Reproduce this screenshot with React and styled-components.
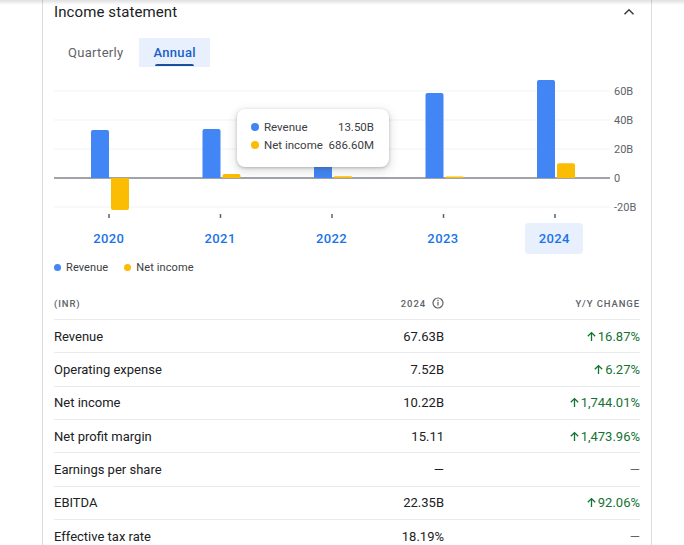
import React from "react";
import styled, { createGlobalStyle } from "styled-components";

const Global = createGlobalStyle`
  html, body { margin: 0; padding: 0; background: #fff; }
  body { font-family: Roboto, "Noto Sans", Arial, sans-serif; color: #202124; overflow: hidden; }
`;

const TopShade = styled.div`
  position: fixed;
  left: 0; right: 0; top: 0;
  height: 5px;
  background: linear-gradient(to bottom, rgba(0,0,0,0.12), rgba(0,0,0,0));
  pointer-events: none;
  z-index: 5;
`;

const Card = styled.section`
  margin-left: 42px;
  width: 610px;
  box-sizing: border-box;
  border-left: 1px solid #dadce0;
  border-right: 1px solid #dadce0;
  padding: 0 11px;
  min-height: 545px;
`;

const Header = styled.div`
  display: flex;
  align-items: center;
  justify-content: space-between;
  height: 24px;
`;

const Title = styled.h2`
  margin: 0;
  font-size: 15px;
  font-weight: 400;
  color: #202124;
  letter-spacing: 0.1px;
`;

const Chevron = styled.svg`
  width: 16px;
  height: 16px;
  margin-right: 3px;
`;

const Tabs = styled.div`
  display: flex;
  gap: 2px;
  margin-top: 14px;
`;

const Tab = styled.button`
  position: relative;
  border: none;
  margin: 0;
  font-family: inherit;
  font-size: 13px;
  font-weight: ${p => (p.$active ? 500 : 400)};
  height: 29px;
  padding: 0 14px 1px;
  border-radius: 0;
  background: ${p => (p.$active ? "#e8f0fe" : "transparent")};
  color: ${p => (p.$active ? "#1a5fc8" : "#5f6368")};
  letter-spacing: 0.3px;
  &::after {
    content: "";
    display: ${p => (p.$active ? "block" : "none")};
    position: absolute;
    left: 16px; right: 16px; bottom: 1px;
    height: 2.5px;
    border-radius: 2px 2px 0 0;
    background: #1a4fa0;
  }
`;

const ChartWrap = styled.div`
  position: relative;
  margin-top: 5px;
`;

const ChartSvg = styled.svg`
  display: block;
  width: 586px;
  height: 151px;
`;

const Tooltip = styled.div`
  position: absolute;
  left: 183px;
  top: 37px;
  width: 152px;
  height: 58px;
  box-sizing: border-box;
  padding: 9px 15px 0 14px;
  background: #fff;
  border-radius: 8px;
  box-shadow: 0 1px 3px rgba(60,64,67,0.3), 0 3px 8px 2px rgba(60,64,67,0.15);
  display: flex;
  flex-direction: column;
`;

const TipRow = styled.div`
  display: flex;
  align-items: center;
  height: 18px;
  font-size: 11.5px;
  color: #3c4043;
`;

const Dot = styled.span`
  width: ${p => p.$size || 8}px;
  height: ${p => p.$size || 8}px;
  border-radius: 50%;
  background: ${p => p.$color};
  flex: none;
  margin-right: ${p => p.$gap || 5}px;
`;

const TipValue = styled.span`
  margin-left: auto;
`;

const Years = styled.div`
  display: flex;
  width: 557px;
  margin-left: -1px;
`;

const YearCell = styled.div`
  flex: 1;
  display: flex;
  justify-content: center;
`;

const Year = styled.div`
  width: 58px;
  height: 31px;
  border-radius: 4px;
  display: flex;
  align-items: center;
  justify-content: center;
  font-size: 13px;
  font-weight: 500;
  color: #1a73e8;
  letter-spacing: 0.4px;
  background: ${p => (p.$active ? "#e8f0fe" : "transparent")};
`;

const Legend = styled.div`
  display: flex;
  align-items: center;
  gap: 16px;
  margin-top: 5px;
  height: 16px;
`;

const LegendItem = styled.div`
  display: flex;
  align-items: center;
  font-size: 11px;
  color: #3c4043;
  letter-spacing: 0.1px;
`;

const Table = styled.div`
  margin-top: 12px;
`;

const Row = styled.div`
  display: grid;
  grid-template-columns: 1fr 110px 196px;
  align-items: center;
  height: ${p => (p.$head ? "32px" : "33.33px")};
  box-sizing: border-box;
  border-top: ${p => (p.$head ? "none" : "1px solid #e8eaed")};
`;

const HeadCell = styled.div`
  font-size: 9.5px;
  font-weight: 500;
  letter-spacing: 0.9px;
  color: #5f6368;
  text-transform: uppercase;
  display: flex;
  align-items: center;
  justify-content: ${p => (p.$right ? "flex-end" : "flex-start")};
  gap: 6px;
`;

const Label = styled.div`
  font-size: 13px;
  color: #202124;
`;

const Value = styled.div`
  font-size: 13px;
  color: #202124;
  text-align: right;
`;

const Change = styled.div`
  font-size: 13px;
  color: ${p => (p.$none ? "#5f6368" : "#137333")};
  display: flex;
  justify-content: flex-end;
  align-items: center;
  gap: 1px;
`;

const InfoIcon = () => (
  <svg width="12" height="12" viewBox="0 0 12 12">
    <circle cx="6" cy="6" r="5" fill="none" stroke="#5f6368" strokeWidth="1.2" />
    <rect x="5.4" y="5" width="1.2" height="3.6" fill="#5f6368" />
    <circle cx="6" cy="3.6" r="0.75" fill="#5f6368" />
  </svg>
);

const UpArrow = () => (
  <svg width="11" height="11" viewBox="0 0 11 11">
    <path d="M5.5 10V1.8M1.8 5.3L5.5 1.6 9.2 5.3" fill="none" stroke="#137333" strokeWidth="1.3" />
  </svg>
);

const years = ["2020", "2021", "2022", "2023", "2024"];
const revenue = [33.1, 33.8, 13.5, 58.6, 67.63];
const netIncome = [-22, 2.7, 1.2, 0.9, 10.22];

const BLUE = "#4285f4";
const YELLOW = "#fbbc04";
const ZERO = 106;
const PX = 29 / 20;

function barPath(x, w, v) {
  const h = Math.max(Math.abs(v) * PX, 1.5);
  const r = Math.min(2, h / 2);
  if (v >= 0) {
    const top = ZERO - h;
    return `M${x} ${ZERO} V${top + r} Q${x} ${top} ${x + r} ${top} H${x + w - r} Q${x + w} ${top} ${x + w} ${top + r} V${ZERO} Z`;
  }
  const bot = ZERO + h;
  return `M${x} ${ZERO} V${bot - r} Q${x} ${bot} ${x + r} ${bot} H${x + w - r} Q${x + w} ${bot} ${x + w} ${bot - r} V${ZERO} Z`;
}

const Chart = () => {
  const grid = [
    { y: 19, l: "60B" },
    { y: 48, l: "40B" },
    { y: 77, l: "20B" },
    { y: 106, l: "0" },
    { y: 135, l: "-20B" },
  ];
  return (
    <ChartSvg viewBox="0 0 586 151">
      {grid.map(g => (
        <g key={g.l}>
          <line
            x1="0"
            x2="556"
            y1={g.y}
            y2={g.y}
            stroke={g.l === "0" ? "#80868b" : "#f1f3f4"}
            strokeWidth={g.l === "0" ? 1.5 : 1}
          />
          <text x="560" y={g.y + 4} fontSize="11" fill="#5f6368" fontFamily="Roboto, sans-serif">
            {g.l}
          </text>
        </g>
      ))}
      {years.map((y, i) => {
        const c = 55 + i * 111.5;
        return (
          <g key={y}>
            <path d={barPath(c - 18, 18, revenue[i])} fill={BLUE} />
            <path d={barPath(c + 2, 18, netIncome[i])} fill={YELLOW} />
            <rect x={c - 0.75} y="142" width="1.5" height="4" fill="#5f6368" />
          </g>
        );
      })}
    </ChartSvg>
  );
};

const rows = [
  { label: "Revenue", value: "67.63B", change: "16.87%" },
  { label: "Operating expense", value: "7.52B", change: "6.27%" },
  { label: "Net income", value: "10.22B", change: "1,744.01%" },
  { label: "Net profit margin", value: "15.11", change: "1,473.96%" },
  { label: "Earnings per share", value: "—", change: null },
  { label: "EBITDA", value: "22.35B", change: "92.06%" },
  { label: "Effective tax rate", value: "18.19%", change: null },
];

export default function App() {
  return (
    <>
      <Global />
      <TopShade />
      <Card>
        <Header>
          <Title>Income statement</Title>
          <Chevron viewBox="0 0 16 16">
            <path d="M3.5 10.2L8 5.8l4.5 4.4" fill="none" stroke="#3c4043" strokeWidth="1.6" />
          </Chevron>
        </Header>
        <Tabs>
          <Tab>Quarterly</Tab>
          <Tab $active>Annual</Tab>
        </Tabs>
        <ChartWrap>
          <Chart />
          <Tooltip>
            <TipRow>
              <Dot $color={BLUE} />
              Revenue
              <TipValue>13.50B</TipValue>
            </TipRow>
            <TipRow>
              <Dot $color={YELLOW} />
              Net income
              <TipValue>686.60M</TipValue>
            </TipRow>
          </Tooltip>
        </ChartWrap>
        <Years>
          {years.map(y => (
            <YearCell key={y}>
              <Year $active={y === "2024"}>{y}</Year>
            </YearCell>
          ))}
        </Years>
        <Legend>
          <LegendItem>
            <Dot $color={BLUE} $size={7} $gap={5} />
            Revenue
          </LegendItem>
          <LegendItem>
            <Dot $color={YELLOW} $size={7} $gap={5} />
            Net income
          </LegendItem>
        </Legend>
        <Table>
          <Row $head>
            <HeadCell>(INR)</HeadCell>
            <HeadCell $right>
              2024 <InfoIcon />
            </HeadCell>
            <HeadCell $right>Y/Y change</HeadCell>
          </Row>
          {rows.map(r => (
            <Row key={r.label}>
              <Label>{r.label}</Label>
              <Value>{r.value}</Value>
              {r.change ? (
                <Change>
                  <UpArrow />
                  {r.change}
                </Change>
              ) : (
                <Change $none>—</Change>
              )}
            </Row>
          ))}
        </Table>
      </Card>
    </>
  );
}
